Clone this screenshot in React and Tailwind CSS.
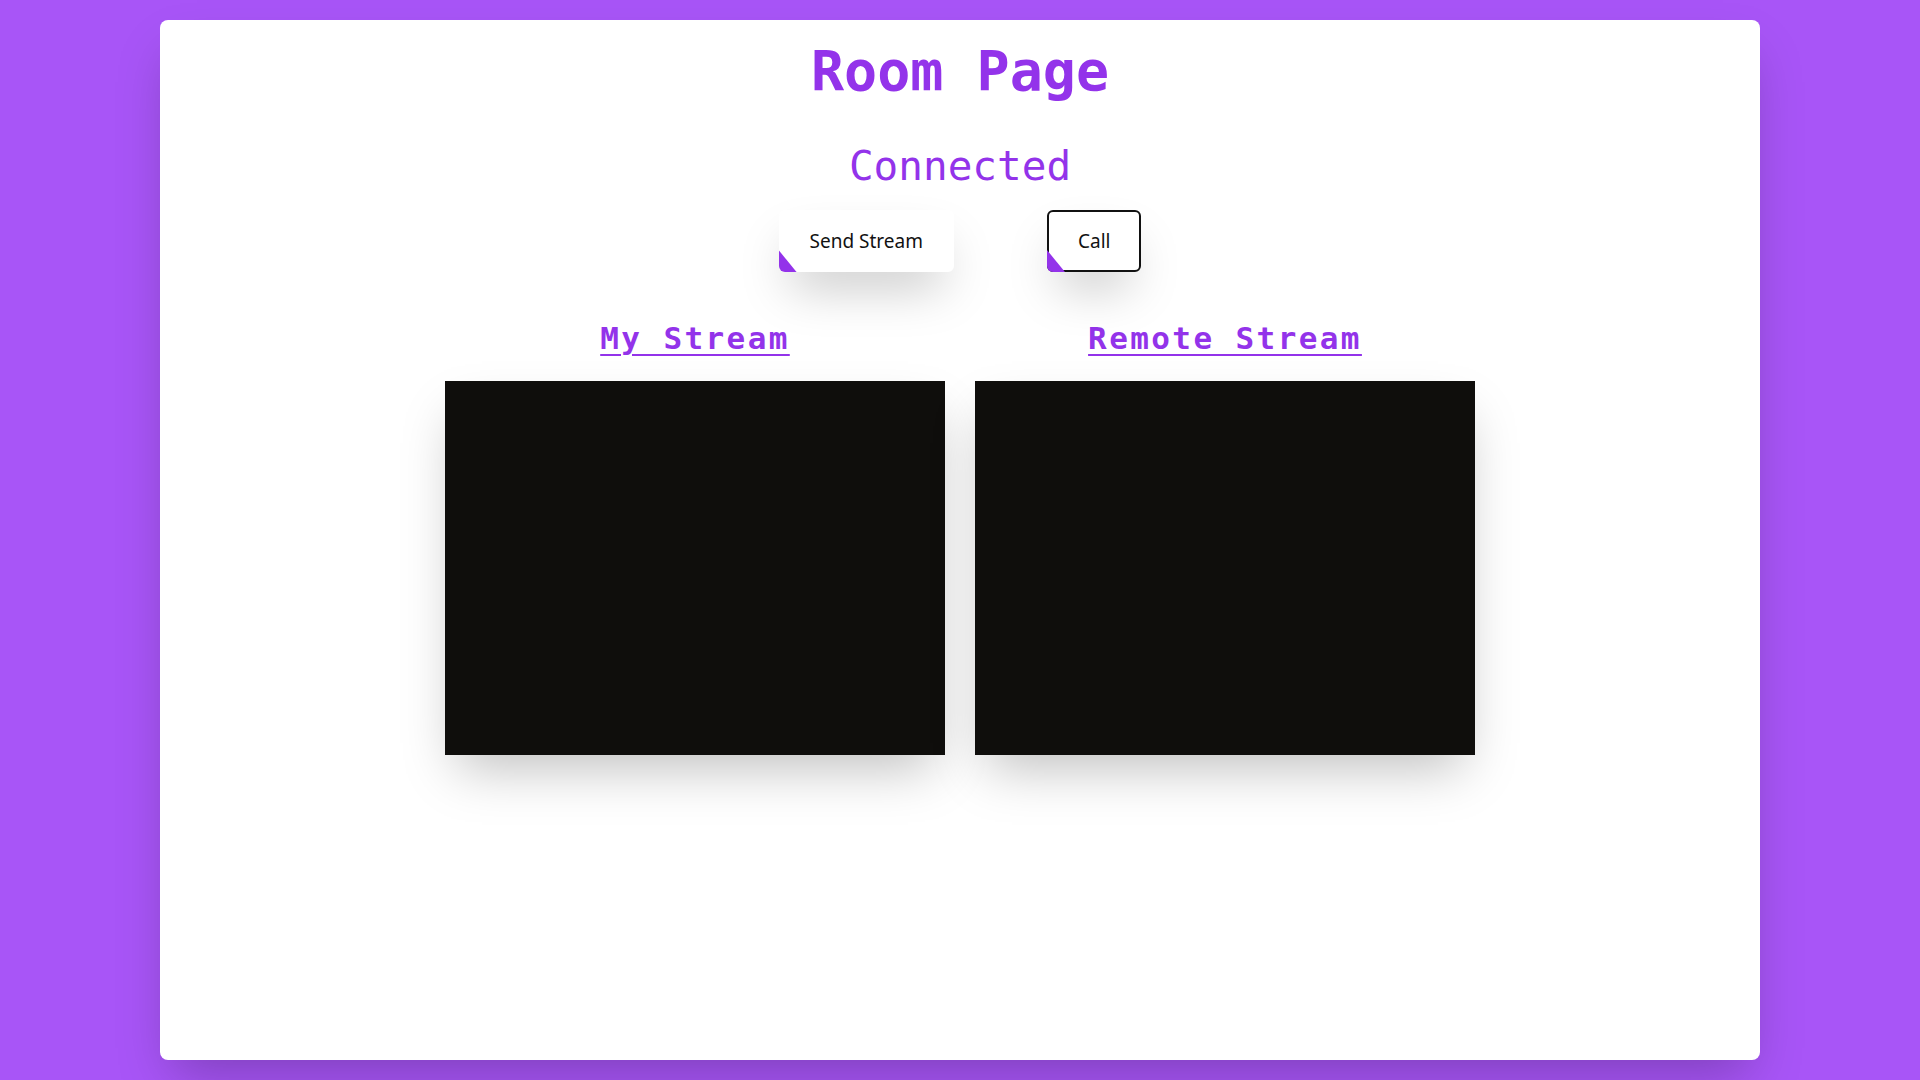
import React from 'react';

const mono = "font-['DejaVu_Sans_Mono','Liberation_Mono',monospace]";

function CornerButton({ label, outlined }) {
  return (
    <button
      type="button"
      className={`relative rounded-md border-2 bg-white px-[29px] py-[15px] text-[19px] leading-7 text-[#111] shadow-2xl font-['Noto_Sans','Open_Sans',sans-serif] ${
        outlined ? 'border-[#111]' : 'border-white'
      }`}
    >
      <span className="absolute -left-[2px] -bottom-[2px] h-[22px] w-[18px] rounded-bl-md bg-[#9333ea] [clip-path:polygon(0_0,0_100%,100%_100%)]" />
      {label}
    </button>
  );
}

function StreamBox({ title }) {
  return (
    <div className="flex w-[500px] flex-col items-center">
      <h2
        className={`${mono} text-[31px] font-bold leading-none tracking-[2.4px] text-[#9333ea] underline decoration-2 underline-offset-[5px]`}
      >
        {title}
      </h2>
      <div className="mt-[27px] h-[374px] w-[500px] bg-[#0f0e0c] shadow-2xl" />
    </div>
  );
}

export default function App() {
  return (
    <div className="h-screen w-full bg-[#a855f7] py-5">
      <div className="mx-auto flex h-full w-5/6 flex-col items-center rounded-lg bg-white pt-6 shadow-2xl">
        <h1 className={`${mono} text-[55px] font-bold leading-none text-[#9333ea]`}>Room Page</h1>
        <h4 className={`${mono} mt-[47px] text-[41px] leading-none text-[#9333ea]`}>Connected</h4>
        <div className="mt-[23px] flex gap-[93px]">
          <CornerButton label="Send Stream" />
          <CornerButton label="Call" outlined />
        </div>
        <div className="mt-[51px] flex gap-[30px]">
          <StreamBox title="My Stream" />
          <StreamBox title="Remote Stream" />
        </div>
      </div>
    </div>
  );
}
